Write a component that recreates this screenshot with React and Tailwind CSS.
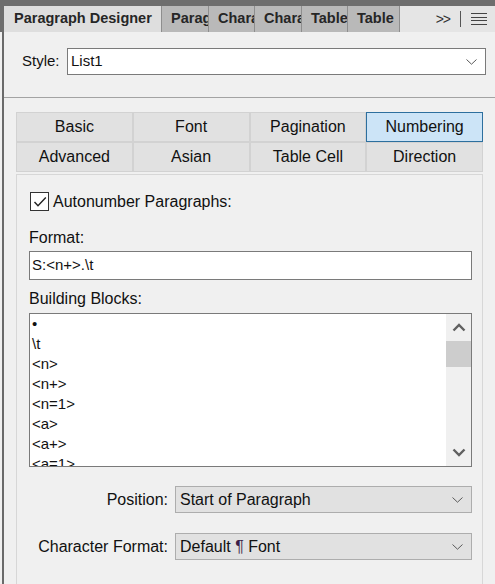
import React from "react";

const Chevron = () => (
  <svg width="11" height="6" viewBox="0 0 11 6" fill="none">
    <polyline points="0.5,0.5 5.5,5.2 10.5,0.5" stroke="#5a5a5a" strokeWidth="1" />
  </svg>
);

const ScrollArrow = ({ down }) => (
  <svg width="14" height="9" viewBox="0 0 14 9" fill="none">
    <polyline
      points={down ? "1.5,1.5 7,7 12.5,1.5" : "1.5,7.5 7,2 12.5,7.5"}
      stroke="#606060"
      strokeWidth="2.4"
    />
  </svg>
);

const TopTab = ({ label, w }) => (
  <div
    className={`${w} h-full shrink-0 overflow-hidden whitespace-nowrap bg-[#b9b9b9] border-r border-[#8e8e8e] pl-[9px] flex items-center font-bold text-[14.5px] text-[#262626]`}
  >
    {label}
  </div>
);

const tabs = [
  { label: "Basic" },
  { label: "Font" },
  { label: "Pagination" },
  { label: "Numbering", active: true },
  { label: "Advanced" },
  { label: "Asian" },
  { label: "Table Cell" },
  { label: "Direction" },
];

const blocks = ["•", "\\t", "<n>", "<n+>", "<n=1>", "<a>", "<a+>", "<a=1>", "<A>", "<A+>"];

export default function App() {
  return (
    <div className="w-[495px] h-[584px] overflow-hidden bg-[#f0f0f0] flex flex-col text-[16px] text-[#111] font-['Liberation_Sans',Arial,sans-serif]">
      <div className="h-[6px] bg-[#6e6e6e] shrink-0" />

      {/* panel tab strip */}
      <div className="h-[26px] shrink-0 flex bg-[#e5e5e5]">
        <div className="w-[4px] bg-[#6e6e6e]" />
        <div className="w-[158px] h-full bg-[#dedede] border-r border-[#8e8e8e] pl-[10px] flex items-center font-bold text-[14.5px] text-[#262626] whitespace-nowrap">
          Paragraph Designer
        </div>
        <TopTab label="Parag" w="w-[47px]" />
        <TopTab label="Chara" w="w-[46px]" />
        <TopTab label="Chara" w="w-[47px]" />
        <TopTab label="Table" w="w-[46px]" />
        <TopTab label="Table" w="w-[52px]" />
        <div className="flex-1 flex items-center justify-end pr-[8px] text-[#333]">
          <span className="text-[14px] mr-[10px] tracking-[-1px]">&gt;&gt;</span>
          <div className="w-px h-[16px] bg-[#555] mr-[10px]" />
          <div className="flex flex-col gap-[2.5px] w-[16px]">
            <div className="h-px bg-[#444]" />
            <div className="h-px bg-[#444]" />
            <div className="h-px bg-[#444]" />
            <div className="h-px bg-[#444]" />
          </div>
        </div>
      </div>

      {/* body */}
      <div className="flex-1 flex flex-col ml-[2px] border-l-2 border-[#6a6a6a]">
        <div className="flex items-center pl-[18px] pt-[16px] text-[15px]">
          <span className="w-[45px]">Style:</span>
          <div className="w-[419px] h-[27px] bg-white border border-[#7a7a7a] flex items-center justify-between pl-[3px] pr-[8px]">
            <span>List1</span>
            <Chevron />
          </div>
        </div>

        <div className="mt-[22px] h-px bg-[#a3a3a3]" />

        <div className="ml-[12px] mt-[14px] w-[467px] grid grid-cols-4">
          {tabs.map((t) => (
            <div
              key={t.label}
              className={`h-[30px] flex items-center justify-center border ${
                t.active
                  ? "bg-[#cce4f7] border-[#2d6f9e]"
                  : "bg-[#e1e1e1] border-[#d2d2d2]"
              }`}
            >
              {t.label}
            </div>
          ))}
        </div>

        <div className="ml-[12px] mt-[2px] w-[467px] flex-1 border border-b-0 border-[#d7d7d7] pl-[12px] pt-[17px] flex flex-col">
          <div className="flex items-center h-[19px]">
            <div className="ml-px w-[19px] h-[19px] bg-white border border-[#333] flex items-center justify-center">
              <svg width="14" height="12" viewBox="0 0 14 12" fill="none">
                <polyline points="1.5,6 5,9.8 12.8,1.5" stroke="#222" strokeWidth="1.4" />
              </svg>
            </div>
            <span className="ml-[4px]">Autonumber Paragraphs:</span>
          </div>

          <div className="mt-[17px] h-[20px] leading-[20px]">Format:</div>
          <div className="mt-[3px] w-[443px] h-[29px] bg-white border border-[#7a7a7a] flex items-center pl-[2px] text-[15px]">
            S:&lt;n+&gt;.\t
          </div>

          <div className="mt-[9px] h-[20px] leading-[20px]">Building Blocks:</div>
          <div className="mt-[4px] w-[443px] h-[154px] bg-white border border-[#7a7a7a] flex overflow-hidden text-[15px]">
            <div className="flex-1 pl-[2px] overflow-hidden">
              {blocks.map((b) => (
                <div key={b} className="h-[20px] leading-[20px] whitespace-nowrap">
                  {b}
                </div>
              ))}
            </div>
            <div className="w-[25px] bg-[#f0f0f0] flex flex-col">
              <div className="h-[27px] flex items-center justify-center">
                <ScrollArrow />
              </div>
              <div className="h-[26px] bg-[#cdcdcd]" />
              <div className="flex-1" />
              <div className="h-[27px] flex items-center justify-center">
                <ScrollArrow down />
              </div>
            </div>
          </div>

          <div className="mt-[19px] flex items-center">
            <span className="w-[139px] text-right">Position:</span>
            <div className="ml-[7px] w-[297px] h-[27px] bg-[#e1e1e1] border border-[#adadad] flex items-center justify-between pl-[4px] pr-[8px]">
              <span>Start of Paragraph</span>
              <Chevron />
            </div>
          </div>

          <div className="mt-[20px] flex items-center">
            <span className="w-[139px] text-right">Character Format:</span>
            <div className="ml-[7px] w-[297px] h-[27px] bg-[#e1e1e1] border border-[#adadad] flex items-center justify-between pl-[4px] pr-[8px]">
              <span>
                Default <span className="text-[#3b1e47]">¶</span> Font
              </span>
              <Chevron />
            </div>
          </div>
        </div>
      </div>
    </div>
  );
}
